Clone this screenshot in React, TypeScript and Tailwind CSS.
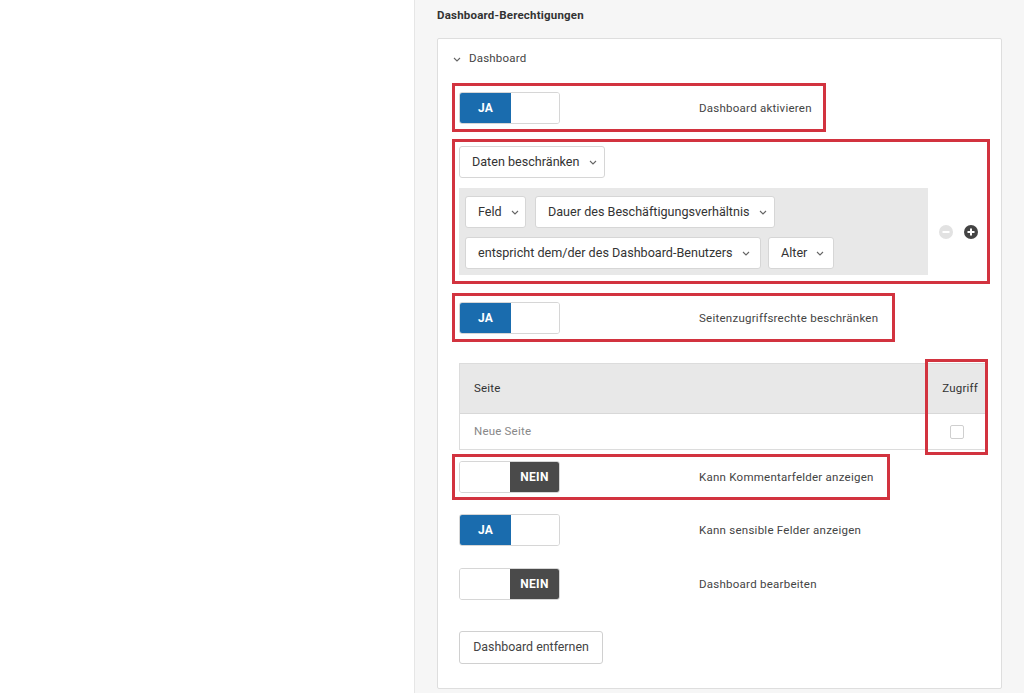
import React from "react";

const font = { fontFamily: "Roboto, 'Liberation Sans', sans-serif" };

function Chevron({ className = "" }: { className?: string }) {
  return (
    <svg width="8" height="5" viewBox="0 0 8 5" className={`shrink-0 ${className}`}>
      <path d="M1 1 L4 4 L7 1" fill="none" stroke="#666" strokeWidth="1.1" />
    </svg>
  );
}

function Toggle({ on }: { on: boolean }) {
  return (
    <div className="flex w-[101px] h-[32px] rounded-[3px] border border-[#d6d6d6] overflow-hidden bg-white shrink-0">
      {on ? (
        <>
          <div className="w-[51px] bg-[#1a6cae] text-white font-bold text-[12px] tracking-[0.3px] flex items-center justify-center">JA</div>
          <div className="flex-1 bg-white" />
        </>
      ) : (
        <>
          <div className="w-[50px] bg-white" />
          <div className="flex-1 bg-[#4a4a4a] text-white font-bold text-[12px] tracking-[0.3px] flex items-center justify-center">NEIN</div>
        </>
      )}
    </div>
  );
}

function ToggleRow({ on, label }: { on: boolean; label: string }) {
  return (
    <div className="flex items-center">
      <div className="w-[240px] shrink-0">
        <Toggle on={on} />
      </div>
      <span className="text-[11.5px] tracking-[0.25px] text-[#444] pt-[1px]">{label}</span>
    </div>
  );
}

function Dropdown({ label, w }: { label: string; w: string }) {
  return (
    <div className={`${w} h-[32px] shrink-0 flex items-center gap-[9px] pl-[12px] whitespace-nowrap overflow-hidden bg-white border border-[#d6d6d6] rounded-[3px] text-[12.6px] text-[#333]`}>
      <span>{label}</span>
      <Chevron />
    </div>
  );
}

export default function App() {
  return (
    <div className="w-[1024px] h-[693px] flex bg-white overflow-hidden" style={font}>
      <div className="w-[414px] shrink-0 bg-white" />
      <div className="flex-1 bg-[#f6f6f6] border-l border-[#e6e6e6] pl-[22px] pr-[22px]">
        <div className="h-[32px] flex items-center text-[11.5px] tracking-[0.2px] font-bold text-[#333]">Dashboard-Berechtigungen</div>
        <div className="mt-[6px] w-[565px] h-[651px] bg-white border border-[#dedede] rounded-[2px] pl-[21px] pt-[12px]">
          <div className="flex items-center h-[16px] ml-[-6px] gap-[8px] text-[11.5px] tracking-[0.2px] text-[#444]">
            <Chevron />
            <span>Dashboard</span>
          </div>
          {/* red box 1 */}
          <div className="mt-[16px] ml-[-7px] w-[374px] border-[3px] border-[#d2333f] px-[4px] pt-[6px] pb-[5px]">
            <ToggleRow on={true} label="Dashboard aktivieren" />
          </div>
          {/* red box 2 */}
          <div className="mt-[7px] ml-[-7px] w-[538px] border-[3px] border-[#d2333f] pl-[4px] pt-[4px] pb-[6px]">
            <Dropdown label="Daten beschränken" w="w-[146px]" />
            <div className="mt-[10px] flex items-center">
              <div className="w-[469px] h-[87px] bg-[#e8e8e8] pl-[6px] pt-[8px] flex flex-col gap-[9px]">
                <div className="flex gap-[9px]">
                  <Dropdown label="Feld" w="w-[61px]" />
                  <Dropdown label="Dauer des Beschäftigungsverhältnis" w="w-[240px]" />
                </div>
                <div className="flex gap-[7px]">
                  <Dropdown label="entspricht dem/der des Dashboard-Benutzers" w="w-[296px]" />
                  <Dropdown label="Alter" w="w-[66px]" />
                </div>
              </div>
              <div className="flex items-center gap-[11px] ml-[11px]">
                <svg width="14" height="14" viewBox="0 0 14 14">
                  <circle cx="7" cy="7" r="7" fill="#e2e2e2" />
                  <path d="M3.5 7 H10.5" stroke="#fff" strokeWidth="2" />
                </svg>
                <svg width="14" height="14" viewBox="0 0 14 14">
                  <circle cx="7" cy="7" r="7" fill="#444" />
                  <path d="M3.5 7 H10.5 M7 3.5 V10.5" stroke="#fff" strokeWidth="2" />
                </svg>
              </div>
            </div>
          </div>
          {/* red box 3 */}
          <div className="mt-[9px] ml-[-7px] w-[443px] border-[3px] border-[#d2333f] px-[4px] pt-[6px] pb-[5px]">
            <ToggleRow on={true} label="Seitenzugriffsrechte beschränken" />
          </div>
          {/* table */}
          <div className="relative mt-[21px] w-[528px] border border-[#dcdcdc] text-[11.5px] tracking-[0.2px]">
            <div className="h-[50px] bg-[#e8e8e8] flex items-center justify-between pl-[14px] pr-[8px] text-[#333] border-b border-[#d8d8d8]">
              <span>Seite</span>
              <span>Zugriff</span>
            </div>
            <div className="h-[35px] bg-white flex items-center justify-between pl-[14px] pr-[22px] text-[#888]">
              <span>Neue Seite</span>
              <div className="w-[14px] h-[14px] border border-[#cfcfcf] rounded-[2px] bg-white" />
            </div>
            <div className="absolute top-[-5px] left-[465px] w-[63px] h-[96px] border-[3px] border-[#d2333f]" />
          </div>
          {/* red box 5 */}
          <div className="mt-[4px] ml-[-7px] w-[438px] border-[3px] border-[#d2333f] px-[4px] py-[4px]">
            <ToggleRow on={false} label="Kann Kommentarfelder anzeigen" />
          </div>
          <div className="mt-[14px]">
            <ToggleRow on={true} label="Kann sensible Felder anzeigen" />
          </div>
          <div className="mt-[22px]">
            <ToggleRow on={false} label="Dashboard bearbeiten" />
          </div>
          <div className="mt-[31px] w-[144px] h-[33px] border border-[#d0d0d0] rounded-[3px] flex items-center justify-center text-[12.4px] text-[#444] bg-white">
            Dashboard entfernen
          </div>
        </div>
      </div>
    </div>
  );
}
